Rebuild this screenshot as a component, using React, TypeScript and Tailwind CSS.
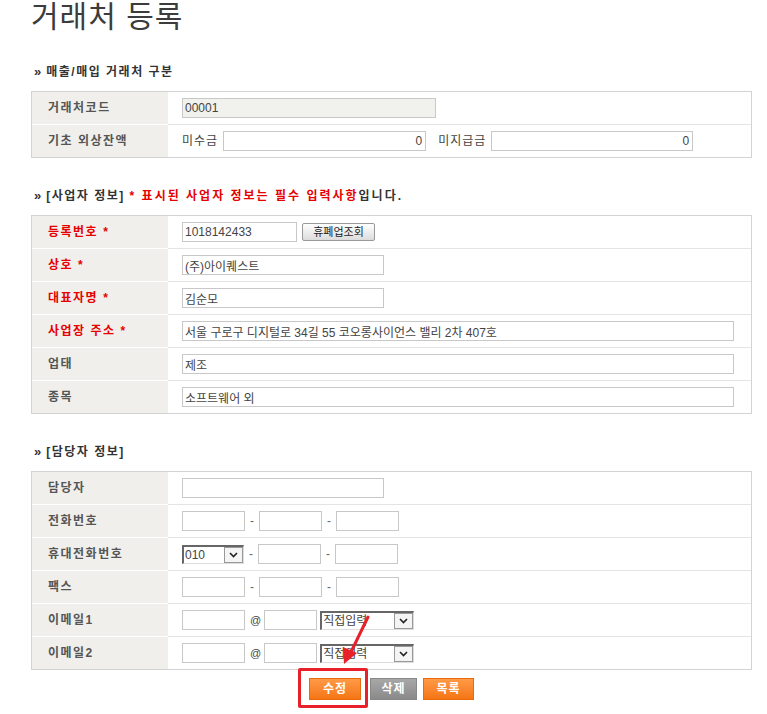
import type { ReactNode } from 'react'

const FONT = "font-['Liberation_Sans','Noto_Sans_CJK_KR',sans-serif]"

function Heading({ children }: { children: ReactNode }) {
  return (
    <div className="flex items-center gap-[5px] h-4 pl-[34px] text-[12px] font-bold text-[#333] leading-4 tracking-[1.5px]">
      <span className="text-[13px] leading-4 -mt-[1px] tracking-normal">»</span>
      <span>{children}</span>
    </div>
  )
}

function Row({ label, required, last, children }: { label: string; required?: boolean; last?: boolean; children: ReactNode }) {
  return (
    <div className="flex h-[33px] last:h-[32px]">
      <div
        className={`w-[136px] shrink-0 bg-[#f0efeb] flex items-center pl-[16px] text-[12px] font-bold tracking-[1.5px] ${
          required ? 'text-[#e60000]' : 'text-[#555]'
        } ${last ? '' : 'border-b border-white'}`}
      >
        {label}
        {required && <span className="ml-[5px]">*</span>}
      </div>
      <div className={`flex-1 flex items-center pl-[14px] gap-[5px] text-[12px] text-[#444] ${last ? '' : 'border-b border-[#e4e4e4]'}`}>
        {children}
      </div>
    </div>
  )
}

function Input({ w, value, right, disabled }: { w: string; value?: string; right?: boolean; disabled?: boolean }) {
  return (
    <input
      readOnly
      value={value ?? ''}
      className={`${w} h-[20px] border border-[#c8c8c8] px-[2px] text-[12px] text-[#444] outline-none ${
        right ? 'text-right pr-[3px]' : ''
      } ${disabled ? 'bg-[#f1f1ed]' : 'bg-white'}`}
    />
  )
}

function FakeSelect({ w, text }: { w: string; text: string }) {
  return (
    <div className={`${w} h-[19px] flex border-t-2 border-l-2 border-[#666] border-b border-r border-b-[#ddd] border-r-[#ddd] bg-white`}>
      <span className="flex-1 text-[12px] leading-[16px] pl-[1px] text-[#444]">{text}</span>
      <span className="w-[19px] h-[16px] border border-[#999] bg-[#f4f4f4] flex items-center justify-center">
        <svg width="9" height="6" viewBox="0 0 9 6">
          <path d="M1 1 L4.5 4.5 L8 1" stroke="#222" strokeWidth="1.6" fill="none" />
        </svg>
      </span>
    </div>
  )
}

const Dash = () => <span className="text-[#666] text-[12px]">-</span>

function EmailRow({ label, last }: { label: string; last?: boolean }) {
  return (
    <Row label={label} last={last}>
      <Input w="w-[63px]" />
      <span className="text-[11px] text-[#444]">@</span>
      <Input w="w-[53px] -ml-[2px]" />
      <FakeSelect w="w-[94px] -ml-[2px]" text="직접입력" />
    </Row>
  )
}

export default function App() {
  return (
    <div className={`relative w-[767px] min-h-[714px] bg-white ${FONT}`}>
      <h1 className="pl-[31px] text-[30px] leading-[34px] text-[#3c3c3c] font-normal tracking-[1px]">거래처 등록</h1>

      <div className="mt-[30px]">
        <Heading>매출/매입 거래처 구분</Heading>
      </div>
      <div className="ml-[31px] mt-[11px] w-[721px] border border-[#d3d3d3]">
        <Row label="거래처코드">
          <Input w="w-[254px]" value="00001" disabled />
        </Row>
        <Row label="기초 외상잔액" last>
          <span className="tracking-[1px]">미수금</span>
          <Input w="w-[203px]" value="0" right />
          <span className="ml-[7px] tracking-[1px]">미지급금</span>
          <Input w="w-[202px]" value="0" right />
        </Row>
      </div>

      <div className="mt-[30px]">
        <Heading>
          [사업자 정보] <span className="text-[#e60000] tracking-[2px]">* 표시된 사업자 정보는 필수 입력사항</span>
          <span className="tracking-[2px]">입니다.</span>
        </Heading>
      </div>
      <div className="ml-[31px] mt-[11px] w-[721px] border border-[#d3d3d3]">
        <Row label="등록번호" required>
          <Input w="w-[115px]" value="1018142433" />
          <button className="w-[73px] h-[18px] border border-[#999] rounded-[2px] bg-gradient-to-b from-white to-[#dcdcdc] text-[11px] text-[#222] leading-none">
            휴폐업조회
          </button>
        </Row>
        <Row label="상호" required>
          <Input w="w-[202px]" value="(주)아이퀘스트" />
        </Row>
        <Row label="대표자명" required>
          <Input w="w-[202px]" value="김순모" />
        </Row>
        <Row label="사업장 주소" required>
          <Input w="w-[552px]" value="서울 구로구 디지털로 34길 55 코오롱사이언스 밸리 2차 407호" />
        </Row>
        <Row label="업태">
          <Input w="w-[552px]" value="제조" />
        </Row>
        <Row label="종목" last>
          <Input w="w-[552px]" value="소프트웨어 외" />
        </Row>
      </div>

      <div className="mt-[30px]">
        <Heading>[담당자 정보]</Heading>
      </div>
      <div className="ml-[31px] mt-[11px] w-[721px] border border-[#d3d3d3]">
        <Row label="담당자">
          <Input w="w-[202px]" />
        </Row>
        <Row label="전화번호">
          <Input w="w-[63px]" />
          <Dash />
          <Input w="w-[63px]" />
          <Dash />
          <Input w="w-[63px]" />
        </Row>
        <Row label="휴대전화번호">
          <FakeSelect w="w-[62px]" text="010" />
          <Dash />
          <Input w="w-[63px]" />
          <Dash />
          <Input w="w-[63px]" />
        </Row>
        <Row label="팩스">
          <Input w="w-[63px]" />
          <Dash />
          <Input w="w-[63px]" />
          <Dash />
          <Input w="w-[63px]" />
        </Row>
        <EmailRow label="이메일1" />
        <EmailRow label="이메일2" last />
      </div>

      <div className="ml-[31px] w-[721px] mt-[8px] flex justify-center">
        <button className="w-[52px] h-[22px] border border-[#e86a10] bg-gradient-to-b from-[#ff9a45] to-[#f57510] text-white text-[12px] font-bold tracking-[1px]">
          수정
        </button>
        <button className="ml-[9px] w-[47px] h-[22px] border border-[#888] bg-gradient-to-b from-[#a8a8a8] to-[#8a8a8a] text-white text-[12px] font-bold tracking-[1px]">
          삭제
        </button>
        <button className="ml-[6px] w-[51px] h-[22px] border border-[#e86a10] bg-gradient-to-b from-[#ff9a45] to-[#f57510] text-white text-[12px] font-bold tracking-[1px]">
          목록
        </button>
      </div>

      {/* annotation: highlight box and arrow */}
      <div className="absolute left-[298px] top-[668px] w-[70px] h-[40px] border-[3px] border-[#e8202a] rounded-[2px] pointer-events-none" />
      <svg className="absolute left-[330px] top-[610px] pointer-events-none" width="50" height="60" viewBox="0 0 50 60">
        <line x1="38" y1="7" x2="21" y2="42" stroke="#e8202a" strokeWidth="3" strokeLinecap="round" />
        <polygon points="14,54 13,37 27,43" fill="#e8202a" />
      </svg>
    </div>
  )
}
